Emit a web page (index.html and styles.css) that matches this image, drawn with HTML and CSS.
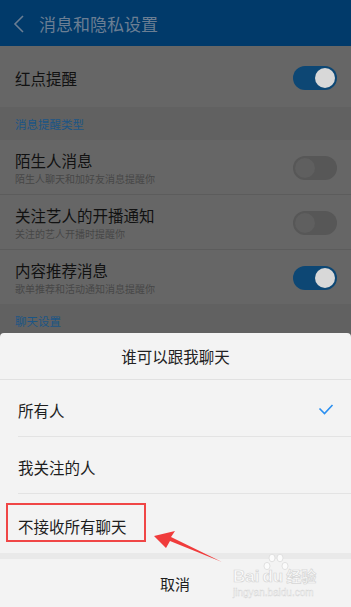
FILE: index.html
```html
<!DOCTYPE html>
<html lang="zh-CN">
<head>
<meta charset="utf-8">
<link rel="stylesheet" href="styles.css">
</head>
<body>
<div class="screen">
  <header class="topbar">
    <svg class="back" width="12" height="18" viewBox="0 0 12 18"><path d="M10 1 L2 9 L10 17" fill="none" stroke="#6b7e93" stroke-width="1.6"/></svg>
    <span class="topbar-title">消息和隐私设置</span>
  </header>
  <div class="row single">
    <span class="row-title">红点提醒</span>
    <span class="toggle on"><span class="knob"></span></span>
  </div>
  <div class="section">消息提醒类型</div>
  <div class="row">
    <div class="row-text">
      <span class="row-title">陌生人消息</span>
      <span class="row-sub">陌生人聊天和加好友消息提醒你</span>
    </div>
    <span class="toggle"><span class="knob"></span></span>
  </div>
  <div class="row">
    <div class="row-text">
      <span class="row-title">关注艺人的开播通知</span>
      <span class="row-sub">关注的艺人开播时提醒你</span>
    </div>
    <span class="toggle"><span class="knob"></span></span>
  </div>
  <div class="row last">
    <div class="row-text">
      <span class="row-title">内容推荐消息</span>
      <span class="row-sub">歌单推荐和活动通知消息提醒你</span>
    </div>
    <span class="toggle on"><span class="knob"></span></span>
  </div>
  <div class="section">聊天设置</div>

  <div class="sheet">
    <div class="sheet-title">谁可以跟我聊天</div>
    <div class="opt">
      <span>所有人</span>
      <svg class="check" width="16" height="12" viewBox="0 0 16 12"><path d="M1.5 4.5 L6.5 9.5 L14.5 1" fill="none" stroke="#2a8ff0" stroke-width="1.6"/></svg>
    </div>
    <div class="opt">
      <span>我关注的人</span>
    </div>
    <div class="opt tall">
      <span>不接收所有聊天</span>
      <span class="mark"></span>
    </div>
    <div class="gap"></div>
    <div class="cancel">取消</div>
    <svg class="arrow" width="80" height="40" viewBox="0 0 80 40"><polygon points="0,5 21,0 17,6 68,31 16,10 12,17" fill="#f03c3c"/></svg>
    <svg class="paw" width="30" height="22" viewBox="0 0 30 22">
      <g fill="#fbfbfb" stroke="#dadada" stroke-width="0.8">
        <ellipse cx="6" cy="13" rx="3" ry="3.6"/>
        <ellipse cx="11" cy="5" rx="3" ry="3.8"/>
        <ellipse cx="19" cy="5" rx="3" ry="3.8"/>
        <ellipse cx="24" cy="13" rx="3" ry="3.6"/>
      </g>
    </svg>
    <div class="watermark">
      <div class="wm-logo"><span class="wm-bai">Bai</span><span class="wm-du">du</span><span class="wm-cn">经验</span></div>
      <div class="wm-url">jingyan.baidu.com</div>
    </div>
  </div>
</div>
</body>
</html>
```
FILE: styles.css
```css
* { box-sizing: border-box; }
html, body { margin: 0; padding: 0; }
body {
  width: 351px;
  height: 607px;
  overflow: hidden;
  font-family: "Noto Sans CJK SC", "Noto Sans", sans-serif;
  background: #666666;
}
.screen {
  position: relative;
  width: 351px;
  height: 607px;
  overflow: hidden;
  background: #666666;
}
.topbar {
  height: 46px;
  background: #013a6a;
  display: flex;
  align-items: center;
  padding-left: 13px;
  gap: 14px;
  box-shadow: 0 1px 0 #747474;
}
.back { display: block; margin-top: 1px; }
.topbar-title {
  color: #6b7e93;
  font-size: 17px;
  line-height: 20px;
  margin-top: 2px;
}
.row {
  display: flex;
  align-items: center;
  justify-content: space-between;
  padding: 10px 14px 8px 15px;
  height: 55px;
  background: #666666;
  border-bottom: 1px solid #5c5c5c;
}
.row.last { border-bottom: none; height: 54px; }
.row.single {
  height: 61px;
  padding-top: 2px;
  padding-bottom: 0;
  border-bottom: none;
}
.row-text { display: flex; flex-direction: column; }
.row-title {
  font-size: 15.5px;
  line-height: 20px;
  color: #111111;
}
.row-sub {
  font-size: 10px;
  line-height: 14px;
  margin-top: 2px;
  color: #474747;
}
.section {
  height: 33px;
  padding: 9px 15px 0;
  font-size: 11.5px;
  line-height: 16px;
  color: #1b5585;
  background: #616161;
}
.toggle {
  position: relative;
  width: 44px;
  height: 24px;
  border-radius: 12px;
  background: #575757;
  flex: none;
}
.toggle .knob {
  position: absolute;
  top: 2px;
  left: 2px;
  width: 20px;
  height: 20px;
  border-radius: 50%;
  background: #5f5f5f;
}
.toggle.on { background: #0d4774; }
.toggle.on .knob { left: 22px; background: #d8d8d8; }

.sheet {
  position: absolute;
  left: 0;
  right: 0;
  top: 333px;
  bottom: 0;
  background: #f3f3f3;
  border-radius: 4px 4px 0 0;
  display: flex;
  flex-direction: column;
}
.sheet-title {
  height: 47px;
  border-bottom: 1px solid #e1e1e1;
  display: flex;
  align-items: center;
  justify-content: center;
  font-size: 15.5px;
  color: #222222;
  padding-bottom: 1px;
}
.opt {
  position: relative;
  height: 57px;
  display: flex;
  align-items: center;
  justify-content: space-between;
  padding: 2px 17px 0 18px;
  font-size: 15.5px;
  color: #1e1e1e;
}
.opt::after {
  content: "";
  position: absolute;
  left: 18px;
  right: 0;
  bottom: 0;
  height: 1px;
  background: #e3e3e3;
}
.opt.tall { height: 59px; padding-top: 4px; }
.opt.tall::after { display: none; }
.check { display: block; }
.mark {
  position: absolute;
  left: 6px;
  top: 9px;
  width: 140px;
  height: 39px;
  border: 2px solid #f04646;
}
.gap { height: 6px; background: #e9e9e9; }
.cancel {
  flex: 1;
  display: flex;
  align-items: center;
  justify-content: center;
  font-size: 15px;
  color: #1e1e1e;
  padding-right: 1px;
}
.arrow {
  position: absolute;
  left: 154px;
  top: 198px;
}
.paw {
  position: absolute;
  left: 261px;
  top: 220px;
}
.watermark {
  position: absolute;
  left: 233px;
  top: 235px;
  color: #fbfbfb;
  -webkit-text-stroke: 0.7px #d6d6d6;
  font-family: "Liberation Sans", Arial, sans-serif;
  font-weight: bold;
  pointer-events: none;
}
.wm-logo { display: flex; align-items: baseline; font-size: 17px; line-height: 16px; }
.wm-du { margin-left: 3px; }
.wm-cn { font-family: "Noto Sans CJK SC", sans-serif; font-size: 15px; margin-left: 3px; }
.wm-url { font-size: 10px; line-height: 12px; margin-top: 2px; font-weight: normal; -webkit-text-stroke: 0.4px #d4d4d4; }
```
